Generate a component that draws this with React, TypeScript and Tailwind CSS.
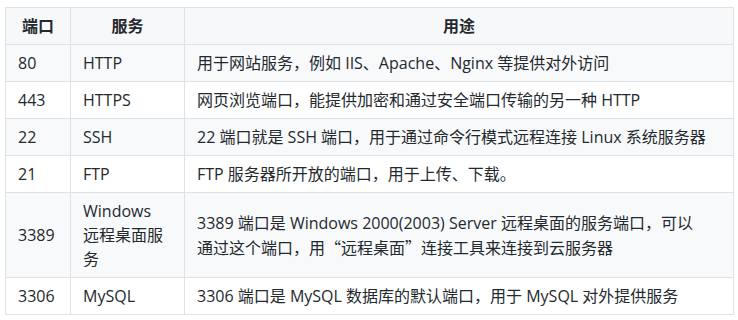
import React from "react";

const rows: { port: string; service: React.ReactNode; desc: React.ReactNode }[] = [
  { port: "80", service: "HTTP", desc: "用于网站服务，例如 IIS、Apache、Nginx 等提供对外访问" },
  { port: "443", service: "HTTPS", desc: "网页浏览端口，能提供加密和通过安全端口传输的另一种 HTTP" },
  { port: "22", service: "SSH", desc: "22 端口就是 SSH 端口，用于通过命令行模式远程连接 Linux 系统服务器" },
  { port: "21", service: "FTP", desc: "FTP 服务器所开放的端口，用于上传、下载。" },
  {
    port: "3389",
    service: (
      <>
        Windows
        <br />
        远程桌面服
        <br />务
      </>
    ),
    desc: (
      <>
        3389 端口是 Windows 2000(2003) Server 远程桌面的服务端口，可以
        <br />
        通过这个端口，用<span className="font-['Noto_Sans_CJK_SC']">“</span>远程桌面
        <span className="font-['Noto_Sans_CJK_SC']">”</span>连接工具来连接到云服务器
      </>
    ),
  },
  { port: "3306", service: "MySQL", desc: "3306 端口是 MySQL 数据库的默认端口，用于 MySQL 对外提供服务" },
];

export default function App() {
  return (
    <div
      className="w-[738px] h-[320px] bg-white pt-[7px] pl-[5px]"
      style={{ fontFamily: '"Open Sans", "Noto Sans CJK SC", sans-serif' }}
    >
      <table className="w-[728px] table-fixed border-collapse text-[16px] leading-[24px] text-[#24292e]">
        <colgroup>
          <col className="w-[65px]" />
          <col className="w-[114px]" />
          <col className="w-[549px]" />
        </colgroup>
        <thead>
          <tr className="bg-[#f6f8fa]">
            <th className="border border-[#dfe2e5] px-3 py-[6px] text-center font-bold">端口</th>
            <th className="border border-[#dfe2e5] px-3 py-[6px] text-center font-bold">服务</th>
            <th className="border border-[#dfe2e5] px-3 py-[6px] text-center font-bold">用途</th>
          </tr>
        </thead>
        <tbody>
          {rows.map((r, i) => (
            <tr key={r.port} className={i % 2 === 0 ? "bg-[#f8f9fb]" : "bg-white"}>
              <td className="border border-[#dfe2e5] px-3 py-[6px] align-middle">{r.port}</td>
              <td className="border border-[#dfe2e5] px-3 py-[6px] align-middle">{r.service}</td>
              <td className="border border-[#dfe2e5] px-3 py-[6px] align-middle whitespace-nowrap">{r.desc}</td>
            </tr>
          ))}
        </tbody>
      </table>
    </div>
  );
}
